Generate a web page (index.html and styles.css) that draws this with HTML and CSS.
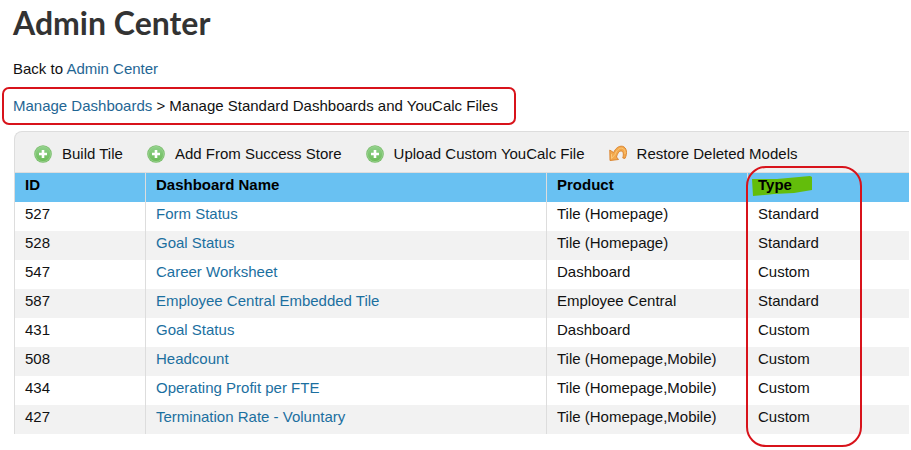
FILE: index.html
```html
<!DOCTYPE html>
<html lang="en">
<head>
<meta charset="utf-8">
<title>Admin Center</title>
<link rel="stylesheet" href="styles.css">
</head>
<body>
<svg class="defs" aria-hidden="true">
  <defs>
    <linearGradient id="green" x1="0" y1="0" x2="0" y2="1">
      <stop offset="0" stop-color="#8fd08a"/>
      <stop offset="1" stop-color="#6cbb58"/>
    </linearGradient>
    <symbol id="add" viewBox="0 0 18 18">
      <circle cx="9" cy="9" r="8.8" fill="#79bd6c"/>
      <circle cx="9" cy="9" r="7.6" fill="url(#green)" stroke="#a5d99b" stroke-width=".6"/>
      <path d="M9 5v8M5 9h8" stroke="#fff" stroke-width="2.6"/>
    </symbol>
    <symbol id="undo" viewBox="0 0 18 18">
      <path d="M.8 5L1 15.500L9.500 14.500L7.500 12C8.500 8.500 10 6 12 6C14.500 6 14.800 9 13.800 13L16 13.400C18.500 8.500 18 2.500 13.500 1.300C9.500 .6 6.500 3.500 4.600 7.600Z" fill="#f3a84c" stroke="#dc8834" stroke-width="1" stroke-linejoin="round"/>
      <path d="M2.500 9V13.500L6 9.500C7.500 5.500 10 3 12.800 3.200C15.500 3.600 16.500 6 16 9" fill="none" stroke="#fbc878" stroke-width="1"/>
    </symbol>
  </defs>
</svg>
<header class="page-head">
  <h1>Admin Center</h1>
  <p class="back">Back to <a href="#">Admin Center</a></p>
  <nav class="crumbs" aria-label="Breadcrumb"><a href="#">Manage Dashboards</a> &gt; Manage Standard Dashboards and YouCalc Files</nav>
</header>
<main class="panel">
  <div class="toolbar">
    <button type="button"><svg aria-hidden="true"><use href="#add"/></svg>Build Tile</button>
    <button type="button"><svg aria-hidden="true"><use href="#add"/></svg>Add From Success Store</button>
    <button type="button"><svg aria-hidden="true"><use href="#add"/></svg>Upload Custom YouCalc File</button>
    <button type="button"><svg aria-hidden="true"><use href="#undo"/></svg>Restore Deleted Models</button>
  </div>
  <table>
    <colgroup><col class="c-id"><col class="c-name"><col class="c-product"><col></colgroup>
    <thead>
      <tr><th scope="col">ID</th><th scope="col">Dashboard Name</th><th scope="col">Product</th>
      <th scope="col" class="type"><svg class="marker" viewBox="0 0 60 20" aria-hidden="true"><path d="M0 3L25 3L58 0L60 1V14L42 17L22 18L1 20Z"/></svg><span class="label">Type</span><span class="outline"></span></th></tr>
    </thead>
    <tbody>
      <tr><td>527</td><td><a href="#">Form Status</a></td><td>Tile (Homepage)</td><td>Standard</td></tr>
      <tr><td>528</td><td><a href="#">Goal Status</a></td><td>Tile (Homepage)</td><td>Standard</td></tr>
      <tr><td>547</td><td><a href="#">Career Worksheet</a></td><td>Dashboard</td><td>Custom</td></tr>
      <tr><td>587</td><td><a href="#">Employee Central Embedded Tile</a></td><td>Employee Central</td><td>Standard</td></tr>
      <tr><td>431</td><td><a href="#">Goal Status</a></td><td>Dashboard</td><td>Custom</td></tr>
      <tr><td>508</td><td><a href="#">Headcount</a></td><td>Tile (Homepage,Mobile)</td><td>Custom</td></tr>
      <tr><td>434</td><td><a href="#">Operating Profit per FTE</a></td><td>Tile (Homepage,Mobile)</td><td>Custom</td></tr>
      <tr><td>427</td><td><a href="#">Termination Rate - Voluntary</a></td><td>Tile (Homepage,Mobile)</td><td>Custom</td></tr>
    </tbody>
  </table>
</main>
</body>
</html>
```
FILE: styles.css
```css
* { box-sizing: border-box; }
body {
  min-height: 100vh;
  margin: 0;
  background: #fff;
  color: #111;
  font: 15px/20px "Liberation Sans", Arial, sans-serif;
}
a { color: #1f6694; text-decoration: none; }
.defs { position: absolute; width: 0; height: 0; }
.page-head { padding: 4px 2px 0; }
h1 {
  margin: 0 0 17px;
  padding-left: 11px;
  color: #333;
  font: 700 32px/38px Lato, sans-serif;
}
.back { margin: 0 0 8px; padding-left: 11px; }
.crumbs {
  width: fit-content;
  padding: 7px 16px 7px 9px;
  border: 2px solid #d8131b;
  border-radius: 7px;
}
.panel { margin: 6px 2px 0 14px; padding-bottom: 14px; }
.toolbar {
  display: flex;
  gap: 24px;
  height: 42px;
  padding: 3px 19px 0;
  border: solid #ddd;
  border-width: 1px 0 1px 1px;
  border-radius: 8px 0 0 0;
  background: #f0f0f0;
}
.toolbar button {
  display: flex;
  align-items: center;
  gap: 10px;
  padding: 0;
  border: 0;
  background: none;
  color: inherit;
  font: inherit;
  white-space: nowrap;
}
.toolbar svg { width: 18px; height: 18px; }
table { width: 100%; border-collapse: separate; border-spacing: 0; table-layout: fixed; }
.c-id { width: 131px; }
.c-name { width: 401px; }
.c-product { width: 201px; }
th, td {
  height: 29px;
  padding: 2px 10px 7px;
  border-left: 1px solid #ddd;
  text-align: left;
  white-space: nowrap;
}
th { background: #69c1f2; color: #000; }
td:last-child { border-left-color: transparent; }
td a { color: #1b6f9f; }
tbody tr:nth-child(even) { background: #f2f2f2; }
.type { position: relative; }
.marker { position: absolute; top: 3px; left: 4px; width: 60px; height: 20px; fill: #63bd0b; }
.label { position: relative; }
.outline {
  position: absolute;
  top: -7px;
  left: -2px;
  width: 116px;
  height: 281px;
  border: 2px solid #d8131b;
  border-radius: 20px;
  pointer-events: none;
}
```
